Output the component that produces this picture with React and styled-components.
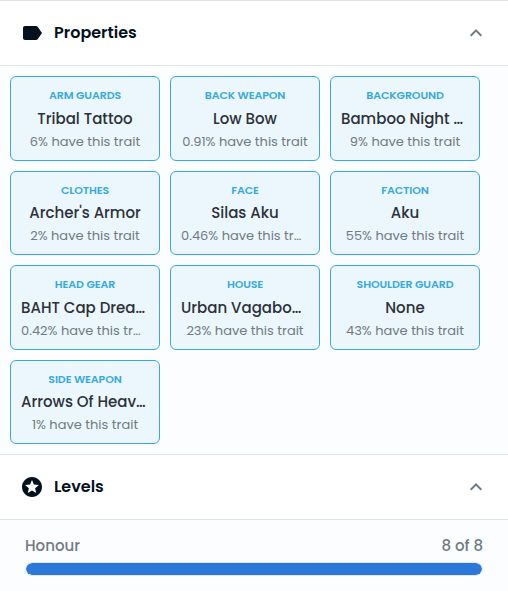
import React from 'react';
import styled, { createGlobalStyle } from 'styled-components';

const traits = [
    { type: 'Arm Guards', value: 'Tribal Tattoo', rarity: '6% have this trait' },
    { type: 'Back Weapon', value: 'Low Bow', rarity: '0.91% have this trait' },
    { type: 'Background', value: 'Bamboo Night …', rarity: '9% have this trait' },
    { type: 'Clothes', value: "Archer's Armor", rarity: '2% have this trait' },
    { type: 'Face', value: 'Silas Aku', rarity: '0.46% have this tr…' },
    { type: 'Faction', value: 'Aku', rarity: '55% have this trait' },
    { type: 'Head Gear', value: 'BAHT Cap Drea…', rarity: '0.42% have this tr…' },
    { type: 'House', value: 'Urban Vagabo…', rarity: '23% have this trait' },
    { type: 'Shoulder Guard', value: 'None', rarity: '43% have this trait' },
    { type: 'Side Weapon', value: 'Arrows Of Heav…', rarity: '1% have this trait' },
];

const levels = [{ name: 'Honour', value: 8, max: 8 }];

const icons = {
    label: 'M17.63 5.84C17.27 5.33 16.67 5 16 5L5 5.01C3.9 5.01 3 5.9 3 7v10c0 1.1.9 1.99 2 1.99L16 19c.67 0 1.27-.33 1.63-.84L22 12l-4.37-6.16z',
    stars: 'M11.99 2C6.47 2 2 6.48 2 12s4.47 10 9.99 10C17.52 22 22 17.52 22 12S17.52 2 11.99 2zm4.24 16L12 15.45 7.77 18l1.12-4.81-3.73-3.23 4.92-.42L12 5l1.92 4.53 4.92.42-3.73 3.23L16.23 18z',
    up: 'M7.41 15.41L12 10.83l4.59 4.58L18 14l-6-6-6 6z',
};

// shortened texts start at the left padding, the others are centered
const isCut = text => text.endsWith('…');

const Icon = ({ name, color }) => (
    <Svg viewBox="0 0 24 24" $color={color}>
        <path d={icons[name]} />
    </Svg>
);

const Panel = ({ icon, title, children }) => (
    <section>
        <Header>
            <Icon name={icon} color="#04111d" />
            <Title>{title}</Title>
            <Icon name="up" color="#707a83" />
        </Header>
        {children}
    </section>
);

const App = () => (
    <Wrap>
        <GlobalStyle />
        <Panel icon="label" title="Properties">
            <Grid>
                {traits.map(item => (
                    <Card key={item.type}>
                        <Type>{item.type}</Type>
                        <Value $cut={isCut(item.value)}>{item.value}</Value>
                        <Rarity $cut={isCut(item.rarity)}>{item.rarity}</Rarity>
                    </Card>
                ))}
            </Grid>
        </Panel>
        <Panel icon="stars" title="Levels">
            <Levels>
                {levels.map(item => (
                    <div key={item.name}>
                        <LevelInfo>
                            <span>{item.name}</span>
                            <span>{`${item.value} of ${item.max}`}</span>
                        </LevelInfo>
                        <Track>
                            <Fill style={{ width: `${(item.value / item.max) * 100}%` }} />
                        </Track>
                    </div>
                ))}
            </Levels>
        </Panel>
    </Wrap>
);

export default App;

const GlobalStyle = createGlobalStyle`
    * {
        box-sizing: border-box;
    }
    body {
        margin: 0;
        background: #fbfdff;
        font-family: Poppins, Inter, "Liberation Sans", sans-serif;
    }
`;

const Wrap = styled.div`
    width: 100%;
    height: 591px;
    overflow: hidden;
    background: #fbfdff;
`;

const Svg = styled.svg`
    flex: none;
    width: 24px;
    height: 24px;
    fill: ${props => props.$color};
`;

const Header = styled.header`
    display: flex;
    align-items: center;
    height: 66px;
    padding: 0 20px;
    background: #fff;
    border-top: 1px solid #e0e3e6;
    border-bottom: 1px solid #e0e3e6;
`;

const Title = styled.h2`
    flex: 1;
    margin: 0 0 0 10px;
    color: #04111d;
    font-size: 16px;
    font-weight: 600;
    line-height: 24px;
`;

const Grid = styled.div`
    display: grid;
    grid-template-columns: repeat(3, 150px);
    gap: 10px;
    padding: 10px;
`;

const Card = styled.div`
    height: 84.5px;
    padding: 10px;
    background: #ebf7fc;
    border: 1px solid #38a9dd;
    border-radius: 6px;
`;

const Line = styled.div`
    text-align: ${props => (props.$cut ? 'left' : 'center')};
    white-space: nowrap;
`;

const Type = styled(Line)`
    color: #38a9dd;
    font-size: 11px;
    font-weight: 600;
    letter-spacing: -0.1px;
    line-height: 16.5px;
    text-transform: uppercase;
`;

const Value = styled(Line)`
    color: #2d3039;
    font-size: 15px;
    font-weight: 500;
    line-height: 30px;
`;

const Rarity = styled(Line)`
    color: #707a83;
    font-size: 13px;
    line-height: 16px;
`;

const Levels = styled.div`
    padding: 14px 25px;
`;

const LevelInfo = styled.div`
    display: flex;
    justify-content: space-between;
    color: #707a83;
    font-size: 15px;
    font-weight: 500;
    line-height: 24px;
`;

const Track = styled.div`
    height: 14px;
    margin-top: 4px;
    overflow: hidden;
    border: 1px solid #e5e8eb;
    border-radius: 7px;
`;

const Fill = styled.div`
    height: 100%;
    background: #2b78d9;
    border-radius: 6px;
`;
